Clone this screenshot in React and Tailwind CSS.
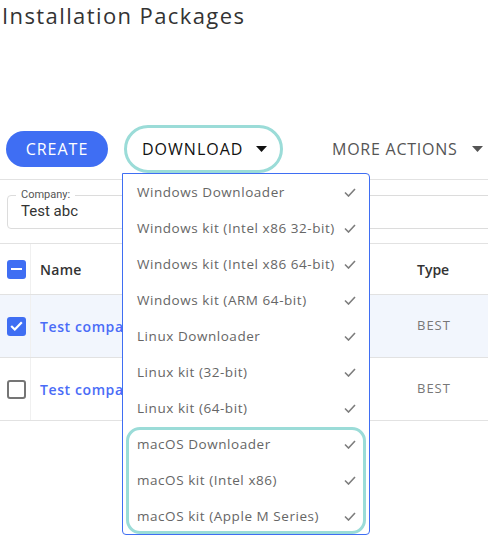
import React from "react";

const menuItems = [
  "Windows Downloader",
  "Windows kit (Intel x86 32-bit)",
  "Windows kit (Intel x86 64-bit)",
  "Windows kit (ARM 64-bit)",
  "Linux Downloader",
  "Linux kit (32-bit)",
  "Linux kit (64-bit)",
  "macOS Downloader",
  "macOS kit (Intel x86)",
  "macOS kit (Apple M Series)",
];

const rows = [
  { name: "Test company", type: "BEST", checked: true },
  { name: "Test company", type: "BEST", checked: false },
];

function Caret({ className }) {
  return (
    <svg width="11" height="6" viewBox="0 0 11 6" className={className}>
      <path d="M0 0 L11 0 L5.5 6 Z" fill="currentColor" />
    </svg>
  );
}

function Check() {
  return (
    <svg width="12" height="9" viewBox="0 0 12 9">
      <path d="M1 4.5 L4.5 8 L11 1" fill="none" stroke="#7d7d7d" strokeWidth="1.6" />
    </svg>
  );
}

function Checkbox({ state }) {
  if (state === "indeterminate") {
    return (
      <div className="w-[19px] h-[19px] rounded-[3px] bg-[#3f6ef3] flex items-center justify-center">
        <div className="w-[11px] h-[2px] bg-white" />
      </div>
    );
  }
  if (state === "checked") {
    return (
      <div className="w-[19px] h-[19px] rounded-[3px] bg-[#3f6ef3] flex items-center justify-center">
        <svg width="13" height="10" viewBox="0 0 13 10">
          <path d="M1.2 5 L4.8 8.5 L11.8 1.2" fill="none" stroke="white" strokeWidth="2.2" />
        </svg>
      </div>
    );
  }
  return <div className="w-[19px] h-[19px] rounded-[3px] border-2 border-[#757575]" />;
}

export default function App() {
  return (
    <div className="w-[488px] h-[548px] overflow-hidden bg-white relative font-['Open_Sans',sans-serif]">
      <h1 className="text-[22px] leading-[30px] pl-[2px] tracking-[1.4px] text-[#333]">Installation Packages</h1>

      <div className="mt-[95px] flex items-center h-[48px]">
        <button className="ml-[6px] w-[102px] h-[36px] rounded-full bg-[#3f6ef3] text-white text-[16px] tracking-[1px]">
          CREATE
        </button>
        <button className="ml-[16px] w-[159px] h-[48px] rounded-full border-[3px] border-[#9bdcd8] flex items-center pl-[15px] text-[16px] tracking-[1px] text-[#111]">
          DOWNLOAD
          <Caret className="ml-[13px] text-[#111]" />
        </button>
        <div className="ml-[49px] flex items-center text-[16px] tracking-[0.75px] text-[#555]">
          MORE ACTIONS
          <Caret className="ml-[14px] text-[#555]" />
        </div>
      </div>

      <div className="mt-[6px] border-t border-[#e2e2e2] h-[64px] pl-[7px] pt-[9px]">
        <fieldset className="w-[600px] border border-[#dcdcdc] rounded-[4px] px-[8px] pb-[7px] font-['Roboto',sans-serif]">
          <legend className="px-[5px] text-[11px] leading-[12px] text-[#555]">Company:</legend>
          <div className="pl-[5px] text-[15px] leading-[20px] text-[#333]">Test abc</div>
        </fieldset>
      </div>

      <div className="border-t border-[#e2e2e2]">
        <div className="flex items-center h-[51px] border-b border-[#e2e2e2]">
          <div className="w-[31px] h-full flex items-center pl-[7px] border-r border-[#f0f0f0]">
            <Checkbox state="indeterminate" />
          </div>
          <div className="ml-[9px] w-[377px] text-[14px] font-semibold tracking-[0.3px] text-[#333]">Name</div>
          <div className="text-[14px] font-semibold text-[#333]">Type</div>
        </div>
        {rows.map((r, i) => (
          <div
            key={i}
            className={
              "flex items-center h-[63px] border-b border-[#e2e2e2] " +
              (r.checked ? "bg-[#f2f6fd]" : "bg-white")
            }
          >
            <div className="w-[31px] h-full flex items-center pl-[7px] border-r border-[#f0f0f0]">
              <Checkbox state={r.checked ? "checked" : "unchecked"} />
            </div>
            <div className="ml-[9px] w-[377px] text-[14px] font-semibold tracking-[0.6px] text-[#4a6cf7]">{r.name}</div>
            <div className="text-[13px] tracking-[1px] text-[#777]">{r.type}</div>
          </div>
        ))}
      </div>

      {/* download dropdown menu */}
      <div className="absolute left-[122px] top-[173px] w-[248px] bg-white border border-[#3f6ef3] rounded-b-[4px] rounded-tr-[4px]">
        {menuItems.map((item) => (
          <div key={item} className="h-[36px] flex items-center justify-between pl-[14px] pr-[13px] text-[13.5px] tracking-[0.55px] text-[#666]">
            <span>{item}</span>
            <Check />
          </div>
        ))}
        <div className="absolute left-[3px] right-[3px] top-[253px] h-[107px] rounded-[14px] border-[3px] border-[#9bdcd8] pointer-events-none" />
      </div>
    </div>
  );
}
